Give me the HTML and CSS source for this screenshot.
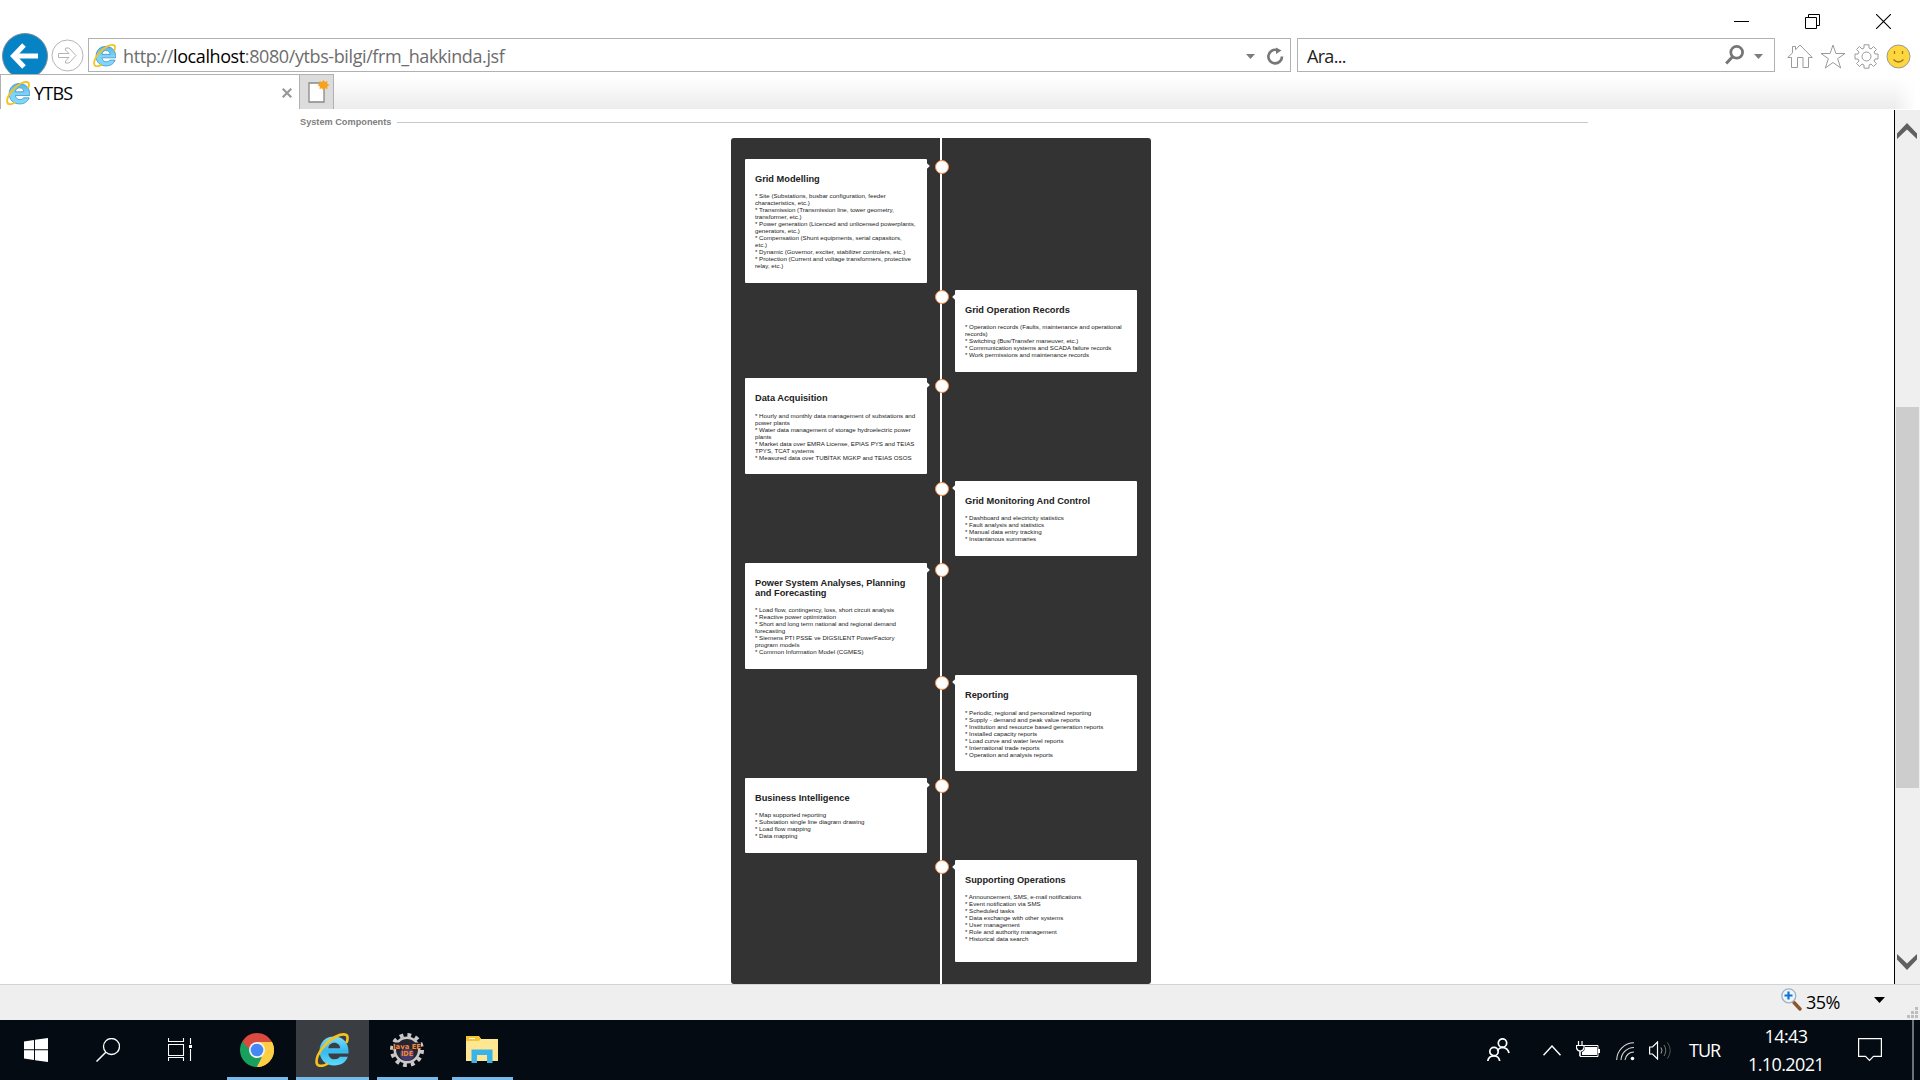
FILE: index.html
```html
<!DOCTYPE html>
<html lang="tr">
<head>
<meta charset="utf-8">
<title>YTBS</title>
<link rel="stylesheet" href="styles.css">
</head>
<body>
<svg class="defs" width="0" height="0">
  <defs>
    <linearGradient id="blue" x1="0" y1="0" x2="0" y2="1"><stop offset="0" stop-color="#7fdcfb"/><stop offset=".5" stop-color="#36b9ee"/><stop offset="1" stop-color="#5fd9fb"/></linearGradient>
    <linearGradient id="blue2" x1="0" y1="0" x2="0" y2="1"><stop offset="0" stop-color="#58b4e6"/><stop offset=".5" stop-color="#7fd3f5"/><stop offset="1" stop-color="#7fd9fa"/></linearGradient>
    <symbol id="ie" viewBox="0 0 34 34">
      <path d="M19 3.500C27.500 3.500 33.500 9.500 33.500 18V20.500H13.300C13.800 24 16 26.300 19.500 26.300C22 26.300 23.800 25.500 24.800 23.800H32.800C30.800 29.300 26 32.500 19.300 32.500C10.500 32.500 4.500 26.500 4.500 18C4.500 9.500 10.500 3.500 19 3.500ZM13.300 15.300H25.200C25 11.900 22.600 9.700 19.300 9.700C16 9.700 13.700 11.900 13.300 15.300Z"/>
      <path d="M13 30.500C7 34 1.600 34 1.500 28.500C1.500 21 11 8.500 21 3.500C27 .5 32.500 .5 32.600 4.800C32.600 6.500 32.200 8.200 31.300 10" fill="none" stroke="#f6c31c" stroke-width="2.600"/>
    </symbol>
  </defs>
</svg>
<div class="screen">
  <header class="chrome">
    <div class="titlebar">
      <svg width="15" height="15"><path d="M0 7.500H15" stroke="#000"/></svg>
      <svg width="15" height="15"><path d="M.5 3.500H11.500V14.500H.5ZM3.500 3V.5H14.500V11.500H12" fill="none" stroke="#000"/></svg>
      <svg width="15" height="15"><path d="M0 0L15 15M15 0L0 15" stroke="#000" stroke-width="1.100"/></svg>
    </div>
    <div class="navrow">
      <svg class="back" width="46" height="42" viewBox="0 0 46 42"><circle cx="23" cy="23" r="22.500" fill="#0583c4" stroke="#7d8c96" stroke-width="1"/><path d="M36 23H13M22 12L11.500 23L22 34" fill="none" stroke="#fff" stroke-width="5"/></svg>
      <svg class="fwd" width="33" height="33" viewBox="0 0 33 33"><circle cx="16.500" cy="16.500" r="15.500" fill="#fff" stroke="#b4b4b4"/><path d="M7.500 14.500H18L14.500 11V9H18L25 16.500L18 24H14.500V22L18 18.500H7.500Z" fill="#fff" stroke="#b4b4b4"/></svg>
      <div class="address">
        <svg class="ie-small" width="23" height="23"><use href="#ie"/></svg>
        <span class="url">http://<b>localhost</b>:8080/ytbs-bilgi/frm_hakkinda.jsf</span>
        <svg class="caret" width="9" height="5"><path d="M0 0H9L4.500 5Z" fill="#7d7d7d"/></svg>
        <svg width="18" height="20" viewBox="0 0 18 20"><path d="M15 11.500A6.800 6.800 0 1 1 10 5" fill="none" stroke="#777" stroke-width="2.700"/><path d="M9 0V2.500L14.500 5.500L9 9Z" fill="#777"/></svg>
      </div>
      <div class="search">
        <span>Ara...</span>
        <svg width="19" height="20" viewBox="0 0 19 20"><circle cx="11.700" cy="7.300" r="5.900" fill="none" stroke="#757575" stroke-width="2.700"/><path d="M7.300 12L1.200 18.500" stroke="#757575" stroke-width="3"/></svg>
        <svg class="caret2" width="9" height="5"><path d="M0 0H9L4.500 5Z" fill="#7d7d7d"/></svg>
      </div>
      <div class="tools">
        <svg width="26" height="25" viewBox="0 0 26 25"><path d="M.8 13.500L5.500 8.800V2.500H8.500V5.800L13 1L25.300 13.500H21.500V23.500H16V13.500H10.500V23.500H4.500V13.500Z" fill="#fff" stroke="#9b9b9b"/></svg>
        <svg width="26" height="25" viewBox="0 0 26 25"><path d="M13 1L15.900 9.500H25L17.600 14.700L20.700 24L13 18.500L5.300 24L8.400 14.700L1 9.500H10.100Z" fill="#fff" stroke="#9b9b9b"/></svg>
        <svg width="25" height="25" viewBox="0 0 25 25"><path d="M10 .8H15V4L17 5L19.500 2.500L22.500 5.500L20 8L21 10H24V15H21L20 17L22.500 19.500L19.500 22.500L17 20L15 21V24.200H10V21L8 20L5.500 22.500L2.500 19.500L5 17L4 15H1V10H4L5 8L2.500 5.500L5.500 2.500L8 5L10 4Z" fill="#fff" stroke="#9b9b9b"/><circle cx="12.500" cy="12.500" r="4.500" fill="#fff" stroke="#9b9b9b"/></svg>
        <svg width="25" height="25" viewBox="0 0 25 25"><circle cx="12.500" cy="12.500" r="11.500" fill="#ffd63c" stroke="#999"/><path d="M8.500 7V10M16.500 7V10M7.500 15.500Q12.500 20.500 17.500 15.500" fill="none" stroke="#8f7a32" stroke-width="1.300"/></svg>
      </div>
    </div>
    <div class="tabs">
      <div class="tab">
        <svg width="24" height="24"><use href="#ie"/></svg>
        <span>YTBS</span>
        <svg width="10" height="10"><path d="M.7 .7L9.300 9.300M9.300 .7L.7 9.300" stroke="#999" stroke-width="2.200"/></svg>
      </div>
      <div class="newtab"><svg width="22" height="23" viewBox="0 0 22 23"><path d="M1 3H16V22H1Z" fill="#fff" stroke="#888" stroke-width="1.300"/><path d="M15.500 0L17 2L19.500 1L19.200 3.800L21.500 5L19.200 6.500L19.500 9L17 8.300L15.500 10.500L14 8.300L11.500 9L11.800 6.500L9.500 5L11.800 3.800L11.500 1L14 2Z" fill="#f9a11b"/></svg></div>
      <div class="tabfill"></div>
    </div>
  </header>

  <div class="viewport">
    <main class="page">
      <div class="legend"><span>System Components</span><i></i></div>
      <section class="timeline">
        <div class="row left"><article class="card"><h3>Grid Modelling</h3><p>* Site (Substations, busbar configuration, feeder<br>characteristics, etc.)<br>* Transmission (Transmission line, tower geometry,<br>transformer, etc.)<br>* Power generation (Licenced and unlicensed powerplants,<br>generators, etc.)<br>* Compensation (Shunt equipments, serial capasitors,<br>etc.)<br>* Dynamic (Governor, exciter, stabilizer controlers, etc.)<br>* Protection (Current and voltage transformers, protective<br>relay, etc.)</p></article></div>
        <div class="row right"><article class="card"><h3>Grid Operation Records</h3><p>* Operation records (Faults, maintenance and operational<br>records)<br>* Switching (Bus/Transfer maneuver, etc.)<br>* Communication systems and SCADA failure records<br>* Work permissions and maintenance records</p></article></div>
        <div class="row left"><article class="card"><h3>Data Acquisition</h3><p>* Hourly and monthly data management of substations and<br>power plants<br>* Water data management of storage hydroelectric power<br>plants<br>* Market data over EMRA License, EPIAS PYS and TEIAS<br>TPYS, TCAT systems<br>* Measured data over TUBİTAK MGKP and TEIAS OSOS</p></article></div>
        <div class="row right"><article class="card"><h3>Grid Monitoring And Control</h3><p>* Dashboard and electricity statistics<br>* Fault analysis and statistics<br>* Manual data entry tracking<br>* Instantanous summaries</p></article></div>
        <div class="row left"><article class="card"><h3>Power System Analyses, Planning<br>and Forecasting</h3><p>* Load flow, contingency, loss, short circuit analysis<br>* Reactive power optimization<br>* Short and long term national and regional demand<br>forecasting<br>* Siemens PTI PSSE ve DIGSILENT PowerFactory<br>program models<br>* Common Information Model (CGMES)</p></article></div>
        <div class="row right"><article class="card"><h3>Reporting</h3><p>* Periodic, regional and personalized reporting<br>* Supply - demand and peak value reports<br>* Institution and resource based generation reports<br>* Installed capacity reports<br>* Load curve and water level reports<br>* International trade reports<br>* Operation and analysis reports</p></article></div>
        <div class="row left"><article class="card"><h3>Business Intelligence</h3><p>* Map supported reporting<br>* Substation single line diagram drawing<br>* Load flow mapping<br>* Data mapping</p></article></div>
        <div class="row right"><article class="card last"><h3>Supporting Operations</h3><p>* Announcement, SMS, e-mail notifications<br>* Event notification via SMS<br>* Scheduled tasks<br>* Data exchange with other systems<br>* User management<br>* Role and authority management<br>* Historical data search</p></article></div>
      </section>
    </main>
    <aside class="scrollbar">
      <svg width="20" height="16"><path d="M0 10.500L10 0L20 10.500V16L10 6.500L0 16Z" fill="#606060"/></svg>
      <div class="thumb"></div>
      <svg width="20" height="16"><path d="M0 5.500L10 16L20 5.500V0L10 9.500L0 0Z" fill="#606060"/></svg>
    </aside>
  </div>

  <div class="status">
    <svg class="mag" width="21" height="23" viewBox="0 0 21 23"><path d="M13 14.500L19 21" stroke="#8a572c" stroke-width="3.400" stroke-linecap="round"/><circle cx="7.800" cy="7.800" r="7" fill="#eaf5fd" stroke="#a3b0bd" stroke-width="1.300"/><path d="M7.500 3.500V11.500M3.500 7.500H11.500" stroke="#1173cf" stroke-width="2.200"/></svg>
    <span>35%</span>
    <svg class="drop" width="11" height="6"><path d="M0 0H11L5.500 6Z"/></svg>
    <svg class="grip" width="12" height="12"><path d="M8 0h3v3h-3zM4 4h3v3h-3zM8 4h3v3h-3zM0 8h3v3h-3zM4 8h3v3h-3zM8 8h3v3h-3z" fill="#bdbdbd"/></svg>
  </div>

  <footer class="taskbar">
    <div class="sys"><svg width="24" height="24"><path d="M0 3.500L10 2V11.300H0ZM11 1.800L24 0V11.300H11ZM0 12.300H10V22L0 20.500ZM11 12.300H24V24L11 22.200Z" fill="#fff"/></svg></div>
    <div class="sys"><svg width="24" height="24"><circle cx="15.500" cy="8.500" r="8" fill="none" stroke="#fff" stroke-width="1.300"/><path d="M9.800 14.200L.5 23.500" stroke="#fff" stroke-width="1.500"/></svg></div>
    <div class="sys"><svg width="24" height="24"><path d="M.5 0V3.500H15.500V0M.5 6.500H15.500V17.500H.5ZM.5 23V19.500H15.500V23M22.500 0V6M22.500 11V23" fill="none" stroke="#fff" stroke-width="1.100"/><path d="M21 7H24V10H21Z" fill="#fff"/></svg></div>
    <div class="apps">
      <div class="app"><svg width="34" height="34" viewBox="0 0 34 34"><path d="M17 17L2.300 8.500A17 17 0 0 1 31.700 8.500Z" fill="#db4a3e"/><path d="M17 17L31.700 8.500A17 17 0 0 1 17 34L12 26Z" fill="#ffce44"/><path d="M17 17L22 25L17 34A17 17 0 0 1 2.300 8.500Z" fill="#17a05e"/><path d="M2.300 8.500H17V17H10Z" fill="#db4a3e"/><path d="M17 9H31.900A17 17 0 0 1 17 34L24 20Z" fill="#ffce44"/><circle cx="17" cy="17" r="8" fill="#f1f1f1"/><circle cx="17" cy="17" r="6.300" fill="#4587f3"/></svg></div>
      <div class="app active"><svg width="34" height="34"><use href="#ie"/></svg></div>
      <div class="app"><svg width="34" height="34" viewBox="0 0 34 34"><circle cx="17" cy="17" r="15" fill="none" stroke="#c9c9c9" stroke-width="4" stroke-dasharray="3.800 4.050"/><circle cx="17" cy="17" r="12.200" fill="#252432" stroke="#c9c9c9" stroke-width="2.500"/><circle cx="17" cy="21" r="7" fill="#49386b"/><path d="M3 9.500H31V16H3Z" fill="#252432"/><text class="ee" x="17" y="15.500" text-anchor="middle" textLength="28" lengthAdjust="spacingAndGlyphs">Java EE</text><text class="ee" x="17" y="23" text-anchor="middle" textLength="12" lengthAdjust="spacingAndGlyphs">IDE</text></svg></div>
      <div class="app"><svg width="32" height="28" viewBox="0 0 32 28"><path d="M0 1Q0 0 1 0H13L15 3H32V25H0Z" fill="#ffe693"/><path d="M0 1Q0 0 1 0H12L15 2.500L13 5H0Z" fill="#f5c52f"/><path d="M3 2.500H9" stroke="#fff"/><path d="M5.500 13.500H26.500V27H21V19H11V27H5.500Z" fill="#39b3e8"/></svg></div>
    </div>
    <div class="tray">
      <svg width="23" height="24" viewBox="0 0 23 24"><g fill="none" stroke="#fff" stroke-width="1.700"><circle cx="15.500" cy="5" r="4.200"/><path d="M10.500 13Q12 9.500 15.500 9.500Q21 10 22 15"/><circle cx="7" cy="13.500" r="4.200"/><path d="M.8 23Q1.500 18 7 18Q12 18 12.700 23"/></g></svg>
      <svg class="t-chev" width="18" height="11"><path d="M.5 10.300L9 1L17.500 10.300" fill="none" stroke="#fff" stroke-width="1.400"/></svg>
      <svg class="t-bat" width="24" height="18" viewBox="0 0 24 18"><path d="M6.500 4.500H22V15.500H4V10" fill="none" stroke="#fff"/><path d="M9 6H21V14H6V11Q9 10 9 6ZM22 8H24V12H22Z" fill="#fff"/><path d="M2.500 0V4M6 0V4M.5 4.500H8V7Q7 10 4.300 10Q1.500 10 .5 7ZM4 10V15" fill="none" stroke="#fff" stroke-width="1.200"/></svg>
      <svg class="t-wifi" width="19" height="19" viewBox="0 0 19 19"><g fill="none" stroke="#ddd" stroke-width="1.100"><path d="M.7 18A17.500 17.500 0 0 1 18 .8M5 18A13 13 0 0 1 18 5.500M9 18A9 9 0 0 1 18 10"/></g><circle cx="16.500" cy="16.500" r="1.800" fill="#fff"/></svg>
      <svg class="t-vol" width="23" height="19" viewBox="0 0 23 19"><path d="M.6 6H3.500L8.500 1V18L3.500 13H.6Z" fill="none" stroke="#fff" stroke-width="1.200"/><g fill="none"><path d="M12 6.500Q14 9.500 12 12.500" stroke="#aaa"/><path d="M15 4Q18.500 9.500 15 15" stroke="#777"/><path d="M18.500 1.500Q24 9.500 18.500 17.500" stroke="#555"/></g></svg>
      <span class="lang">TUR</span>
      <div class="clock"><span>14:43</span><span class="date">1.10.2021</span></div>
      <svg class="t-note" width="24" height="24"><path d="M.6 .6H23.400V18.400H15.500L11.500 22.500L7.500 18.400H.6Z" fill="none" stroke="#fff" stroke-width="1.200"/></svg>
      <div class="desk"></div>
    </div>
  </footer>
</div>
</body>
</html>
```
FILE: styles.css
```css
* { box-sizing: border-box; }
body { margin: 0; background: #fff; overflow: hidden; font-family: "Open Sans", "Noto Sans", sans-serif; }
svg { display: block; flex: none; }
.defs { position: absolute; }
.active svg { fill: url(#blue); }
.ie-small, .tab svg { fill: url(#blue2); stroke: #2f86c4; stroke-width: 1px; }
.screen { width: 1920px; height: 1080px; display: flex; flex-direction: column; }

.chrome { height: 109px; flex: none; }
.titlebar { height: 32px; display: flex; justify-content: flex-end; gap: 56px; padding: 14px 29px 0 0; }
.navrow { height: 42px; display: flex; align-items: flex-start; padding-left: 1px; overflow: hidden; }
.back { margin: 1px -1px 0 1px; }
.fwd { margin: 7px 0 0 4px; }
.address, .search { height: 34px; margin-top: 6px; border: 1px solid #b1b1b1; display: flex; align-items: center; font-size: 18px; }
.address { width: 1203px; margin-left: 4px; padding: 0 5px 0 4px; }
.url { flex: 1; margin-left: 7px; padding-top: 1px; color: #6d6d6d; letter-spacing: -0.4px; white-space: nowrap; }
.url b { color: #000; font-weight: 400; }
.caret { margin: 2px 12px 0 0; }
.search { width: 478px; margin-left: 6px; padding: 0 11px 0 9px; color: #222; }
.search span { flex: 1; padding-top: 1px; letter-spacing: -0.7px; }
.caret2 { margin: 2px 0 0 10px; }
.tools { display: flex; gap: 7.400px; margin: 12px 0 0 12px; }
.tabs { height: 35px; display: flex; }
.tab { width: 299px; border: 1px solid #b1b1b1; border-bottom: 0; border-right: 0; display: flex; align-items: center; padding: 1px 7px 0 5px; font-size: 18px; }
.tab span { flex: 1; margin-left: 4px; letter-spacing: -0.8px; }
.newtab { width: 35px; border: 1px solid #b1b1b1; border-bottom: 0; background: #dcdcdc; padding: 5px 0 0 8px; }
.tabfill { flex: 1; background: linear-gradient(to right, transparent 1560px, #fff 1582px), linear-gradient(#fff 8%, #ececec); }

.viewport { height: 875px; flex: none; display: flex; }
.page { flex: 1; padding-top: 7px; overflow: hidden; font-family: "Liberation Sans", Arial, sans-serif; }
.legend { height: 12px; margin: 0 306px 0 300px; display: flex; align-items: center; gap: 6px; font-size: 9.2px; font-weight: 700; color: #808080; white-space: nowrap; }
.legend i { flex: 1; height: 1px; background: #c8c8c8; }
.timeline { width: 420px; height: 846px; margin: 10px 0 0 731px; padding: 21px 14px 0; border-radius: 3px; background: linear-gradient(#fff, #fff) 209px 0 / 2px 100% no-repeat #333; display: flex; flex-direction: column; gap: 6.7px; }
.row { display: flex; }
.row.right { justify-content: flex-end; }
.card { position: relative; width: 182px; padding: 15px 0 13.800px 10px; background: #fff; border-radius: 1px; color: #222; }
.card.last { padding-bottom: 20.300px; }
.card::before { content: ""; position: absolute; top: 0.700px; width: 12px; height: 12px; border: 1px solid #f58d4a; border-radius: 50%; background: #fff; }
.left .card::before { left: 190px; }
.right .card::before { left: -20px; }
.card::after { content: ""; position: absolute; top: 5px; width: 4px; height: 4px; background: #fff; transform: rotate(45deg); }
.left .card::after { right: -2px; }
.right .card::after { left: -2px; }
.card h3 { margin: 0; font-size: 9.250px; line-height: 10px; white-space: nowrap; }
.card p { margin: 8.200px 0 0; font-size: 6.170px; line-height: 7px; white-space: nowrap; }

.scrollbar { width: 26px; margin-top: 1px; border-left: 1px solid #000; background: #efefef; display: flex; flex-direction: column; padding: 13px 1px 14px; }
.scrollbar svg { margin-left: 1px; }
.thumb { height: 381px; margin: 268px 0 166px; background: #cdcdcd; }

.status { height: 36px; flex: none; background: #efefef; border-top: 1px solid #d4d4d4; display: flex; font-size: 18px; line-height: 34px; }
.mag { margin: 3px 0 0 1781px; }
.status span { width: 72px; padding-left: 4px; letter-spacing: -0.6px; }
.drop { margin-top: 12px; }
.grip { margin: 22px 0 0 22px; }

.taskbar { height: 60px; flex: none; background: #050b13; display: flex; color: #fff; }
.sys { width: 72px; display: flex; align-items: center; justify-content: center; }
.apps { display: flex; gap: 2px; margin-left: 5px; }
.app { width: 73px; padding-right: 2px; display: flex; align-items: center; justify-content: center; background: linear-gradient(#76b9ed, #76b9ed) 6px 57px / 61px 3px no-repeat; }
.app.active { background: linear-gradient(#76b9ed, #76b9ed) 0 57px / 73px 3px no-repeat #3a3d42; }
.ee { font: 700 7px "DejaVu Sans", sans-serif; fill: #f58a33; }
.tray { flex: 1; display: flex; align-items: center; justify-content: flex-end; font-size: 18px; }
.t-chev { margin-left: 33px; }
.t-bat { margin-left: 15px; }
.t-wifi { margin-left: 16px; margin-top: 2px; }
.t-vol { margin-left: 14px; }
.lang { width: 32px; margin-left: 17px; letter-spacing: -1px; }
.clock { width: 76px; margin-left: 27px; display: flex; flex-direction: column; align-items: center; line-height: 28px; white-space: nowrap; letter-spacing: -0.600px; }
.t-note { margin-left: 34px; }
.desk { width: 2px; height: 60px; margin: 0 6px 0 30px; background: #6e7277; }
```
